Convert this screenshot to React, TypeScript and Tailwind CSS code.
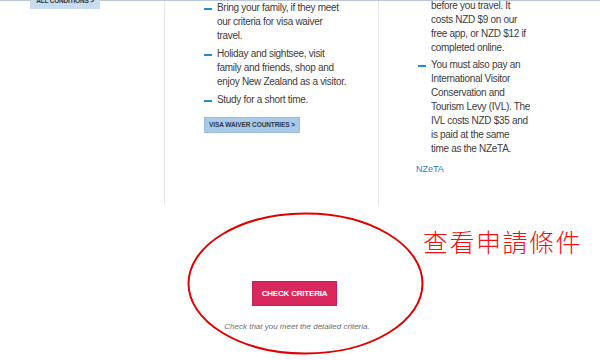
import React from "react";

const font = { fontFamily: "'Liberation Sans', Arial, sans-serif" };

function Item({ children, dash = true, w }: { children: React.ReactNode; dash?: boolean; w: string }) {
  return (
    <li className="flex">
      <span className="w-[13px] shrink-0 pt-[7px]">
        {dash && <span className="block h-[1.5px] w-[8px] bg-[#1f8ad6]" />}
      </span>
      <span className={w}>{children}</span>
    </li>
  );
}

export default function App() {
  return (
    <div className="relative h-[360px] w-[600px] overflow-hidden bg-white text-[#3b3b3b]" style={font}>
      <div className="border-t border-[#b9c7d9]">
        <div className="flex h-[204px]">
          <div className="w-[165px] shrink-0 border-r border-[#e6e6e6] pl-[30px]">
            <div className="-mt-[8px] flex h-[16px] w-[70px] items-center justify-center bg-[#c8dcef] text-[6.5px] font-bold tracking-[-0.2px] text-[#333]">
              ALL CONDITIONS &gt;
            </div>
          </div>
          <div className="w-[214px] shrink-0 border-r border-[#e6e6e6] pl-[39px]">
            <ul className="flex flex-col gap-[4px] text-[10px] leading-[14px] tracking-[-0.3px]">
              <Item w="w-[130px]">Bring your family, if they meet our criteria for visa waiver travel.</Item>
              <Item w="w-[130px]">Holiday and sightsee, visit family and friends, shop and enjoy New Zealand as a visitor.</Item>
              <Item w="w-[130px]">Study for a short time.</Item>
            </ul>
            <div className="mt-[10px] flex h-[16px] w-[96px] items-center justify-center border border-[#9dbbd9] bg-[#a9c9e8] text-[6.5px] font-bold tracking-[-0.1px] text-[#2f3a48]">
              VISA WAIVER COUNTRIES &gt;
            </div>
          </div>
          <div className="flex-1 pl-[39px]">
            <ul className="-mt-[2px] flex flex-col gap-[3px] text-[10px] leading-[14px] tracking-[-0.3px]">
              <Item w="w-[100px]" dash={false}>before you travel. It costs NZD $9 on our free app, or NZD $12 if completed online.</Item>
              <Item w="w-[100px]">
                You must also pay an International Visitor Conservation and Tourism Levy (IVL). The IVL costs NZD $35 and is paid at the same
                <br />
                time as the NZeTA.
              </Item>
            </ul>
            <div className="-ml-[2px] mt-[6px] text-[9px] leading-[14px] text-[#1c7cc9]">NZeTA</div>
          </div>
        </div>
        <div className="flex flex-col items-center pr-[11px] pt-[76px]">
          <div className="flex h-[25px] w-[85px] items-center justify-center border border-[#c41f50] bg-[#d9285c] text-[8px] font-bold tracking-[-0.2px] text-white">
            CHECK CRITERIA
          </div>
          <div className="ml-[5px] mt-[15px] text-[8px] italic text-[#6b6b6b]">
            Check that you meet the detailed criteria.
          </div>
        </div>
      </div>

      <svg className="pointer-events-none absolute left-0 top-0" width="600" height="360">
        <ellipse cx="305.5" cy="283.5" rx="117" ry="70" fill="none" stroke="#e00000" strokeWidth="2" />
      </svg>
      <div
        className="absolute left-[423px] top-[226px] text-[25px] font-light leading-[30px] text-[#ee1111]"
        style={{ fontFamily: "'Noto Sans CJK TC', 'Noto Sans CJK SC', sans-serif", letterSpacing: "1.5px" }}
      >
        查看申請條件
      </div>
    </div>
  );
}
